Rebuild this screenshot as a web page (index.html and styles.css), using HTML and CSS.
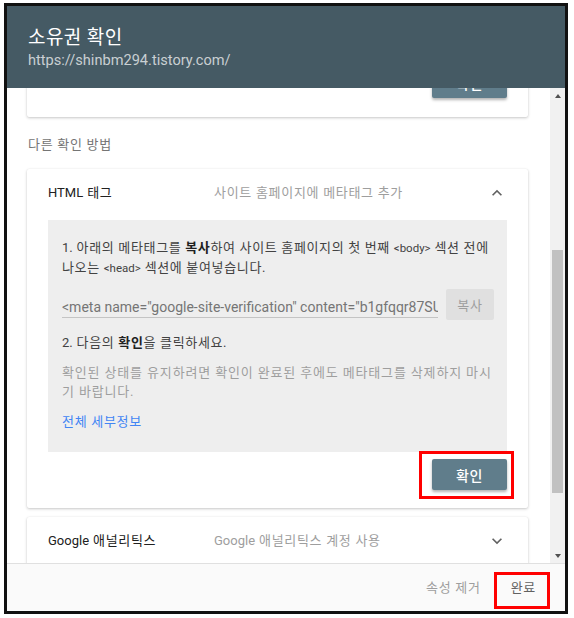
FILE: index.html
```html
<!DOCTYPE html>
<html lang="ko">
<head>
<meta charset="utf-8">
<title>소유권 확인</title>
<link rel="stylesheet" href="styles.css">
</head>
<body>
<div class="frame">
  <header class="dlg-head">
    <h1 class="dlg-title">소유권 확인</h1>
    <div class="dlg-url">https://shinbm294.tistory.com/</div>
  </header>
  <div class="dlg-body">
    <div class="scroll">
      <div class="scroll-inner">
        <div class="card card-top">
          <div class="actions"><button class="btn-raised">확인</button></div>
        </div>
        <div class="section-label">다른 확인 방법</div>
        <div class="card">
          <div class="card-head">
            <span class="method-name"><span class="lat">HTML</span> 태그</span>
            <span class="method-desc">사이트 홈페이지에 메타태그 추가</span>
            <svg class="chev" viewBox="0 0 24 24" width="20" height="20"><path d="M12 8l-6 6 1.41 1.41L12 10.83l4.59 4.58L18 14z"/></svg>
          </div>
          <div class="panel">
            <p class="step"><span class="lat">1.</span> 아래의 메타태그를 <b>복사</b>하여 사이트 홈페이지의 첫 번째 <span class="tag">&lt;body&gt;</span> 섹션 전에 나오는 <span class="tag">&lt;head&gt;</span> 섹션에 붙여넣습니다.</p>
            <div class="copy-row">
              <div class="meta-field">&lt;meta name="google-site-verification" content="b1gfqqr87SUCkX0pQz3vR7wLmT5yHn2" /&gt;</div>
              <button class="btn-flat-grey">복사</button>
            </div>
            <p class="step step2"><span class="lat">2.</span> 다음의 <b>확인</b>을 클릭하세요.</p>
            <p class="note">확인된 상태를 유지하려면 확인이 완료된 후에도 메타태그를 삭제하지 마시기 바랍니다.</p>
            <a class="link" href="#">전체 세부정보</a>
          </div>
          <div class="actions actions-main">
            <button class="btn-raised marked">확인<span class="mark mark-verify"></span></button>
          </div>
        </div>
        <div class="card card-ga">
          <div class="card-head">
            <span class="method-name"><span class="lat">Google</span> 애널리틱스</span>
            <span class="method-desc"><span class="lat">Google</span> 애널리틱스 계정 사용</span>
            <svg class="chev" viewBox="0 0 24 24" width="20" height="20"><path d="M16.59 8.59L12 13.17 7.41 8.59 6 10l6 6 6-6z"/></svg>
          </div>
        </div>
      </div>
    </div>
    <div class="scrollbar">
      <div class="sb-btn"><span class="tri-up"></span></div>
      <div class="sb-track"><div class="sb-thumb"></div></div>
      <div class="sb-btn"><span class="tri-down"></span></div>
    </div>
  </div>
  <footer class="dlg-foot">
    <button class="btn-text btn-muted">속성 제거</button>
    <button class="btn-text marked">완료<span class="mark mark-done"></span></button>
  </footer>
</div>
</body>
</html>
```

FILE: styles.css
```css
* { box-sizing: border-box; }
html, body { margin: 0; padding: 0; background: #ffffff; }
body {
  font-family: Roboto, "Noto Sans CJK KR", sans-serif;
  font-size: 13px;
  letter-spacing: 0.7px;
  color: #212121;
}
button { font-family: inherit; letter-spacing: inherit; border: 0; cursor: pointer; }
.lat { letter-spacing: 0; }

.frame {
  margin: 3px 0 0 4px;
  width: 564px;
  height: 611px;
  border: 3px solid #111111;
  display: flex;
  flex-direction: column;
  background: #ffffff;
}

.dlg-head {
  height: 82px;
  flex: none;
  background: #455a64;
  padding: 19px 21px 0 21px;
}
.dlg-title {
  margin: 0;
  font-size: 19px;
  font-weight: 400;
  line-height: 26px;
  color: #ffffff;
  letter-spacing: 0.4px;
}
.dlg-url {
  font-size: 14.6px;
  letter-spacing: 0;
  line-height: 18px;
  color: rgba(255, 255, 255, 0.72);
}

.dlg-body {
  height: 475px;
  flex: none;
  display: flex;
}
.scroll {
  flex: 1;
  overflow: hidden;
  background: #ffffff;
}
.scroll-inner {
  margin-top: -41px;
  padding: 0 22px 0 20px;
}

.card {
  background: #ffffff;
  border-radius: 2px;
  box-shadow: 0 1px 3px rgba(0, 0, 0, 0.22), 0 0 1px rgba(0, 0, 0, 0.08);
}
.card-top { padding: 20px 21px 19px; }
.card-ga { margin-top: 9px; height: 60px; }

.actions { display: flex; justify-content: flex-end; }
.actions-main { margin: 7px 21px 0; padding-bottom: 18px; }

.btn-raised {
  position: relative;
  width: 75px;
  height: 31px;
  border-radius: 2px;
  background: #607d8b;
  color: #ffffff;
  font-size: 14px;
  font-weight: 500;
  box-shadow: 0 2px 3px rgba(0, 0, 0, 0.3);
}

.section-label {
  margin: 18px 0 14px 1px;
  line-height: 20px;
  color: #757575;
}

.card-head {
  display: grid;
  grid-template-columns: 166px 1fr 20px;
  align-items: center;
  padding: 14px 21px 17px;
  line-height: 20px;
}
.method-name { color: #212121; }
.method-desc { color: #9e9e9e; }
.chev { fill: #616161; }

.panel {
  margin: 0 21px;
  background: #eeeeee;
  padding: 18px 13px 21px 14px;
  line-height: 19px;
}
.panel p { margin: 0; }
.step { color: #424242; letter-spacing: 0.65px; }
.step b { color: #212121; font-weight: 700; }
.tag { font-size: 11.5px; letter-spacing: 0; }
.step2 { margin-top: 13px !important; }
.note { margin-top: 11px !important; color: #9e9e9e; letter-spacing: 0.85px; }
.link {
  display: block;
  margin-top: 11px;
  color: #4285f4;
  text-decoration: none;
  letter-spacing: 0.7px;
}

.copy-row {
  display: flex;
  align-items: flex-end;
  gap: 8px;
  margin-top: 11px;
  height: 31px;
}
.meta-field {
  flex: 1;
  min-width: 0;
  white-space: nowrap;
  overflow: hidden;
  font-size: 14px;
  letter-spacing: 0;
  line-height: 20px;
  color: #757575;
  border-bottom: 1px solid #c4c4c4;
  margin-bottom: 2px;
}
.btn-flat-grey {
  width: 48px;
  height: 31px;
  border-radius: 2px;
  background: #e0e0e0;
  color: #9e9e9e;
  font-size: 13px;
}

.scrollbar {
  width: 15px;
  flex: none;
  background: #f1f1f1;
  display: flex;
  flex-direction: column;
}
.sb-btn {
  height: 15px;
  display: flex;
  align-items: center;
  justify-content: center;
}
.tri-up, .tri-down { width: 0; height: 0; border-left: 3.5px solid transparent; border-right: 3.5px solid transparent; }
.tri-up { border-bottom: 4px solid #505050; }
.tri-down { border-top: 4px solid #505050; }
.sb-track { flex: 1; }
.sb-thumb {
  margin: 147px 2px 0;
  height: 243px;
  background: #c1c1c1;
}

.dlg-foot {
  flex: 1;
  background: #fafafa;
  border-top: 1px solid #e0e0e0;
  display: flex;
  justify-content: flex-end;
  align-items: center;
  gap: 6px;
  padding: 0 17px 2px 0;
}
.btn-text {
  position: relative;
  background: transparent;
  padding: 0 12px;
  height: 32px;
  font-size: 13px;
  color: #616161;
}
.btn-muted { color: #9e9e9e; }

.mark {
  position: absolute;
  border: 3px solid #ff0000;
  pointer-events: none;
}
.mark-verify { left: -13px; right: -7px; top: -8px; bottom: -9px; }
.mark-done { left: -5px; right: -2px; top: 1px; bottom: -6px; }
```
